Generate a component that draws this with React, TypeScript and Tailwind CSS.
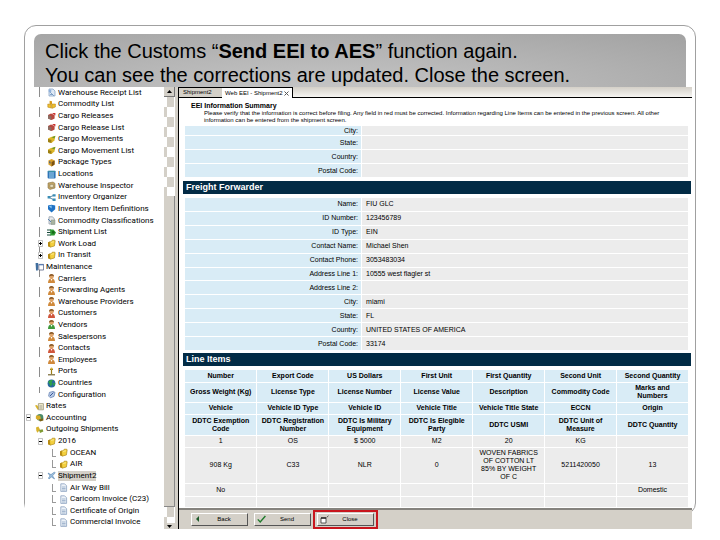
import React from "react"

type IconName =
  | "receipt"
  | "commodity"
  | "release"
  | "movement"
  | "package"
  | "location"
  | "inspector"
  | "organizer"
  | "shield"
  | "classes"
  | "truck"
  | "folder"
  | "maintenance"
  | "person"
  | "personGreen"
  | "personRed"
  | "port"
  | "globe"
  | "config"
  | "rates"
  | "accounting"
  | "outgoing"
  | "plane"
  | "doc"

type TreeItem = {
  label: string
  icon: IconName
  level: 0 | 1 | 2
  toggle?: "+" | "-"
  branch?: boolean
  selected?: boolean
}

const treeItems: TreeItem[] = [
  { label: "Warehouse Receipt List", icon: "receipt", level: 1 },
  { label: "Commodity List", icon: "commodity", level: 1 },
  { label: "Cargo Releases", icon: "release", level: 1 },
  { label: "Cargo Release List", icon: "release", level: 1 },
  { label: "Cargo Movements", icon: "movement", level: 1 },
  { label: "Cargo Movement List", icon: "movement", level: 1 },
  { label: "Package Types", icon: "package", level: 1 },
  { label: "Locations", icon: "location", level: 1 },
  { label: "Warehouse Inspector", icon: "inspector", level: 1 },
  { label: "Inventory Organizer", icon: "organizer", level: 1 },
  { label: "Inventory Item Definitions", icon: "shield", level: 1 },
  { label: "Commodity Classifications", icon: "classes", level: 1 },
  { label: "Shipment List", icon: "truck", level: 1 },
  { label: "Work Load", icon: "folder", level: 1, toggle: "+" },
  { label: "In Transit", icon: "folder", level: 1, toggle: "+" },
  { label: "Maintenance", icon: "maintenance", level: 0 },
  { label: "Carriers", icon: "person", level: 1 },
  { label: "Forwarding Agents", icon: "person", level: 1 },
  { label: "Warehouse Providers", icon: "person", level: 1 },
  { label: "Customers", icon: "personRed", level: 1 },
  { label: "Vendors", icon: "personGreen", level: 1 },
  { label: "Salespersons", icon: "person", level: 1 },
  { label: "Contacts", icon: "personRed", level: 1 },
  { label: "Employees", icon: "person", level: 1 },
  { label: "Ports", icon: "port", level: 1 },
  { label: "Countries", icon: "globe", level: 1 },
  { label: "Configuration", icon: "config", level: 1 },
  { label: "Rates", icon: "rates", level: 0 },
  { label: "Accounting", icon: "accounting", level: 0, toggle: "-" },
  { label: "Outgoing Shipments", icon: "outgoing", level: 0 },
  { label: "2016", icon: "folder", level: 1, toggle: "-" },
  { label: "OCEAN", icon: "folder", level: 2, branch: true },
  { label: "AIR", icon: "folder", level: 2, branch: true },
  { label: "Shipment2", icon: "plane", level: 1, toggle: "-", selected: true },
  { label: "Air Way Bill", icon: "doc", level: 2, branch: true },
  { label: "Caricom Invoice (C23)", icon: "doc", level: 2, branch: true },
  { label: "Certificate of Origin", icon: "doc", level: 2, branch: true },
  { label: "Commercial Invoice", icon: "doc", level: 2, branch: true },
]

const shipperRows = [
  ["City:", ""],
  ["State:", ""],
  ["Country:", ""],
  ["Postal Code:", ""],
]

const forwarderRows = [
  ["Name:", "FIU GLC"],
  ["ID Number:", "123456789"],
  ["ID Type:", "EIN"],
  ["Contact Name:", "Michael Shen"],
  ["Contact Phone:", "3053483034"],
  ["Address Line 1:", "10555 west flagler st"],
  ["Address Line 2:", ""],
  ["City:", "miami"],
  ["State:", "FL"],
  ["Country:", "UNITED STATES OF AMERICA"],
  ["Postal Code:", "33174"],
]

const headRows = [
  {
    height: "h-[12px]",
    cells: ["Number", "Export Code", "US Dollars", "First Unit", "First Quantity", "Second Unit", "Second Quantity"],
  },
  {
    height: "h-[20px]",
    cells: [
      "Gross Weight (Kg)",
      "License Type",
      "License Number",
      "License Value",
      "Description",
      "Commodity Code",
      "Marks and Numbers",
    ],
  },
  {
    height: "h-[12px]",
    cells: ["Vehicle", "Vehicle ID Type", "Vehicle ID", "Vehicle Title", "Vehicle Title State", "ECCN", "Origin"],
  },
  {
    height: "h-[21px]",
    cells: [
      "DDTC Exemption Code",
      "DDTC Registration Number",
      "DDTC Is Military Equipment",
      "DDTC Is Elegible Party",
      "DDTC USMI",
      "DDTC Unit of Measure",
      "DDTC Quantity",
    ],
  },
]

const bodyRows = [
  { height: "h-[12px]", cells: ["1", "OS", "$ 5000", "M2", "20", "KG", ""] },
  {
    height: "h-[36px]",
    cells: ["908 Kg", "C33", "NLR", "0", "WOVEN FABRICS OF COTTON LT 85% BY WEIGHT OF C", "5211420050", "13"],
  },
  { height: "h-[13px]", cells: ["No", "", "", "", "", "", "Domestic"] },
  { height: "h-[11px]", cells: ["", "", "", "", "", "", ""] },
]

const indent = { 0: "pl-0", 1: "pl-[12px]", 2: "pl-[24px]" }

const person = (shirt: string) => (
  <>
    <circle cx="4.5" cy="2.6" r="2.3" fill="#e0a468" />
    <path d="M2 2.6a2.5 2.5 0 0 1 5 0C6 1.4 4 1.4 2 2.6z" fill="#8a5a28" />
    <path d="M1 9c0-3 1.4-4.4 3.5-4.4S8 6 8 9z" fill={shirt} />
    <path d="M3.6 5l.9 2 .9-2z" fill="#fff" />
  </>
)

const glyphs: Record<IconName, React.ReactNode> = {
  receipt: (
    <>
      <path d="M2 1h4l2 2v5H2z" fill="#dfe9f5" stroke="#7d9cc0" strokeWidth=".7" />
      <path d="M3 4l4 4M3 6.5h3" stroke="#6f93bd" strokeWidth=".8" />
      <circle cx="3" cy="3" r="1.4" fill="#8fb0da" />
    </>
  ),
  commodity: (
    <>
      <path d="M2.6.8l2.4.4v3H2.6z" fill="#d99a1a" />
      <path d="M.8 4l3.4.6V8L.8 7.2zM4.8 4h3.6v3L4.8 8.4z" fill="#efc02f" stroke="#b07c10" strokeWidth=".5" />
    </>
  ),
  release: (
    <>
      <path d="M1 3l3-1.6L7.6 3v3.6L4.6 8 1 6.6z" fill="#b8473e" />
      <path d="M1 3l3.4 1.2V8L1 6.6z" fill="#8a6d62" />
      <path d="M5 1h3.4v2.6z" fill="#c9302c" />
    </>
  ),
  movement: (
    <>
      <path d="M1 3.6L4 2l4.4-1-1 4.4L4.6 8 1 7z" fill="#dcb528" />
      <path d="M1 4l3.4 1V8L1 7z" fill="#9b7e14" />
      <path d="M4.6 2.2L8.4.8 7.4 3.6z" fill="#6a9a2a" />
    </>
  ),
  package: (
    <>
      <path d="M1.4 2.4L4.6 1l3 1.4v4.2L4.6 8.4l-3.2-1.8z" fill="#d9a02c" />
      <path d="M4.6 4v4.4l3-1.8V2.4z" fill="#7b5212" />
      <path d="M2 3l1.6.7v2L2 5z" fill="#5c6b78" />
    </>
  ),
  location: (
    <>
      <rect x=".6" y=".8" width="8" height="7.6" rx="1" fill="#2f74b8" />
      <path d="M2 3h5M2 5h5M2 7h5" stroke="#b5e3f5" strokeWidth=".9" />
      <path d="M.8 1.4h7.6" stroke="#3e9a9e" strokeWidth=".8" />
    </>
  ),
  inspector: (
    <>
      <path d="M1 2l5-1 2 1.4V7L3 8.4 1 7z" fill="#c2a566" stroke="#8a7446" strokeWidth=".6" />
      <path d="M3 3.4h3.4v3H3z" fill="#e6dcbc" stroke="#8f8058" strokeWidth=".6" />
    </>
  ),
  organizer: (
    <>
      <path d="M2 4.4L6.6 2.4M2 4.4l4.8 2.4" stroke="#4f7c98" strokeWidth=".9" />
      <path d="M.6 3h2.8v2.6H.6zM5.6 1.2h3v2.2h-3zM5.6 5.6h3v2.4h-3z" fill="#3b8db5" />
    </>
  ),
  shield: (
    <>
      <path d="M1 1.6L4.6.8l3.6.8v3.6L4.6 8.6 1 5.2z" fill="#1f72c4" />
      <path d="M1.8 2.2l2.8-.6v3z" fill="#8cc6f0" />
    </>
  ),
  classes: (
    <>
      <path d="M2 .8h3.6L7.4 3v5H2z" fill="#e8eaec" stroke="#8793a0" strokeWidth=".7" />
      <path d="M4 4h4v4.4H4z" fill="#a9b4a0" stroke="#8a9088" strokeWidth=".5" />
      <path d="M1 3l3 3" stroke="#4878a8" strokeWidth=".9" />
    </>
  ),
  truck: (
    <>
      <path d="M0 2h4M0 4.5h4M0 7h4" stroke="#174a3b" strokeWidth="1" />
      <path d="M3 1.6h3.4L9 4.4 7.4 7.4H3.4z" fill="#2e9a32" />
      <circle cx="6.2" cy="4.4" r="1.4" fill="#186818" />
    </>
  ),
  folder: (
    <>
      <path d="M1 3.2l2-.8V8l-2-.6z" fill="#b98a10" />
      <path d="M2.4 3l2-.4.8-1.4h2.6l.4.8-.8 5L3 8.2z" fill="#f3cf3e" stroke="#a5800f" strokeWidth=".6" />
      <path d="M4 3.4l3-.6" stroke="#fff3a8" strokeWidth=".7" />
    </>
  ),
  maintenance: (
    <>
      <path d="M.6 1h2.6v4L2.8 8.4H1L.8 5z" fill="#3f6e9e" />
      <path d="M3.8 2.4h4.8V8H3.8z" fill="#fff" stroke="#555f80" strokeWidth=".8" />
      <path d="M3.8 2.8h4.8" stroke="#4c78b8" strokeWidth="1" />
    </>
  ),
  person: person("#d08a3c"),
  personGreen: person("#3f9a3c"),
  personRed: person("#d0563c"),
  port: (
    <>
      <path d="M4.5 1v6M3 2.4h3" stroke="#a08018" strokeWidth="1.2" />
      <path d="M1 7.8h7" stroke="#6b5a20" strokeWidth="1.1" />
      <circle cx="4.5" cy="1.4" r="1" fill="#d8b838" />
    </>
  ),
  globe: (
    <>
      <circle cx="4.5" cy="4.5" r="3.9" fill="#27689f" />
      <path d="M1.2 3C2.6.8 5 .6 6 1.4L4.6 3.2l1 1.2-1.8 3L2.4 5zM6.4 3.4l2 .8-1.2 2.8-1.2-1z" fill="#2fa04a" />
    </>
  ),
  config: (
    <>
      <path d="M2.4 2.4l3.8-1 1.8 1L7 6.4 3.4 7.8 1.6 6z" fill="#b9cbe6" stroke="#5a78ae" strokeWidth=".7" />
      <path d="M3 6l3.4-3.4" stroke="#38579a" strokeWidth="1" />
    </>
  ),
  rates: (
    <>
      <path d="M0 3.6l2.6 4.2 1.6-1.6L2 3z" fill="#dcb62c" />
      <path d="M3.4 1.6h5v6.2h-5z" fill="#f5efcf" stroke="#8f8a6c" strokeWidth=".7" />
      <path d="M4.4 4h3M4.4 6h3" stroke="#777" strokeWidth=".7" />
    </>
  ),
  accounting: (
    <>
      <circle cx="5" cy="4.4" r="3.3" fill="#4a8a6a" />
      <path d="M1 2.4h4l1 3-3 1.6L.8 5.6z" fill="#d8ac28" />
      <path d="M4 6.8l4.4-1.6v2.4L5 8.6z" fill="#7b6214" />
    </>
  ),
  outgoing: (
    <>
      <path d="M1 2.6l2.4-1.2L5 4.4 2.6 7.8 1.4 6z" fill="#d8b22c" />
      <path d="M4 5l3.6-.8.8 2.4L5 8z" fill="#7f9a34" />
    </>
  ),
  plane: (
    <path
      d="M1 2l3 1.6L7.4 1l.8.8L5.6 4.8 7.6 8 4.4 6 2 8l-.6-1L3 5z"
      fill="#9fc0de"
      stroke="#4779a8"
      strokeWidth=".5"
    />
  ),
  doc: (
    <>
      <path d="M1.8.8h3.8l2 2v5.6H1.8z" fill="#edf2f8" stroke="#7d96b8" strokeWidth=".7" />
      <path d="M3 4h3.6M3 5.5h3.6M3 7h3.6" stroke="#7390b6" strokeWidth=".6" />
    </>
  ),
}

const App = () => {
  return (
    <div className="bg-white px-6 pt-[25px] pb-6 font-['Liberation_Sans',Arial,sans-serif] text-black">
      <div className="rounded-[12px] border border-[#a0a0a0]">
        <SlideTitle />
        <div className="relative mr-[3px] -mb-[15px] flex h-[442px] bg-white">
          <NavigationTree />
          <ScrollBar />
          <EeiWindow />
        </div>
      </div>
    </div>
  )
}

const SlideTitle = () => (
  <h1 className="mx-[9px] mt-[8px] h-[53px] rounded-t-[7px] bg-[radial-gradient(ellipse_at_45%_110%,#c6c6c6,#b5b5b5_50%,#a2a2a2)] pt-[5px] pl-[11px] text-[20px] leading-[24px] whitespace-nowrap">
    Click the Customs “<b>Send EEI to AES</b>” function again.
    <br />
    You can see the corrections are updated. Close the screen.
  </h1>
)

const NavigationTree = () => (
  <nav
    aria-label="Explorer"
    className="w-[139px] flex-shrink-0 bg-[repeating-linear-gradient(#8c8c8c_0_10px,transparent_10px_20px)] bg-[length:1px_306px] bg-[position:14px_0] bg-no-repeat font-[Roboto,'Noto_Sans',sans-serif] text-[8px] leading-[10px]"
  >
    <ul className="flex h-[441px] flex-col">
      {treeItems.map((item) => (
        <li key={item.label} className={`flex min-h-0 flex-1 items-center ${indent[item.level]}`}>
          <span className="mr-[3px] flex w-[7px] flex-shrink-0 justify-center">
            {item.toggle && <Toggle sign={item.toggle} label={item.label} />}
            {item.branch && <span className="ml-[3px] h-[8px] w-[4px] border-b border-l border-[#999]" />}
          </span>
          <svg viewBox="0 0 9 9" className="mr-[2px] h-[9px] w-[9px] flex-shrink-0" aria-hidden="true">
            {glyphs[item.icon]}
          </svg>
          <a href="#" className={item.selected ? "bg-[#d4d0c8] whitespace-nowrap" : "whitespace-nowrap"}>
            {item.label}
          </a>
        </li>
      ))}
    </ul>
  </nav>
)

const Toggle = ({ sign, label }: { sign: "+" | "-"; label: string }) => (
  <button aria-label={`Toggle ${label}`} className="block bg-white">
    <svg viewBox="0 0 7 7" className="h-[7px] w-[7px]">
      <path d="M1.5.5h4v6h-4z" fill="#fff" stroke="#999" strokeWidth=".6" />
      <path d={sign === "+" ? "M2 3.5h3M3.5 2v3" : "M2 3.5h3"} stroke="#000" />
    </svg>
  </button>
)

const track =
  "bg-[conic-gradient(#d4d0c8_25%,#fff_0_50%,#d4d0c8_0_75%,#fff_0)] bg-[length:20px_20px] bg-[position:-7px_0]"

const ScrollBar = () => (
  <div className="flex w-[15px] flex-shrink-0 flex-col border-r border-black bg-[#d4d0c8] pr-[3px]">
    <button
      aria-label="Scroll up"
      className="flex h-[10px] items-center justify-center border-r border-b border-[#777] bg-[#d4d0c8]"
    >
      <svg viewBox="0 0 5 3" className="h-[3px] w-[5px]">
        <path d="M0 3L2.5 0 5 3z" />
      </svg>
    </button>
    <div className={`h-[99px] border-r border-white ${track}`} />
    <div className="flex-1 border-r border-b border-[#888] bg-[#d4d0c8]" />
    <div className={`h-[16px] border-r border-white ${track}`} />
    <button aria-label="Scroll down" className="flex h-[6px] items-center justify-center bg-[#d4d0c8]">
      <svg viewBox="0 0 5 3" className="h-[3px] w-[5px]">
        <path d="M0 0h5L2.5 3z" />
      </svg>
    </button>
  </div>
)

const EeiWindow = () => (
  <section className="flex min-w-0 flex-1 flex-col">
    <div className="flex h-[11px] flex-shrink-0 border-b border-black bg-linear-to-b from-[#d4d0c8] to-[#f6f5f2] text-[6px] leading-[9px] whitespace-nowrap">
      <button className="w-[43px] border-t border-black bg-[#d4d0c8] px-[4px] text-left">Shipment2</button>
      <button className="-mb-px flex w-[71px] items-center justify-between border-t border-r border-black bg-white px-[3px]">
        Web EEI - Shipment2
        <svg viewBox="0 0 5 5" className="h-[5px] w-[5px]" aria-hidden="true">
          <path d="M.5.5l4 4M4.5.5l-4 4" stroke="#555" />
        </svg>
      </button>
    </div>
    <div className="h-[28px] flex-shrink-0 pt-[4px] pr-[6px] pl-[12px]">
      <h2 className="text-[7px] leading-[8px] font-bold">EEI Information Summary</h2>
      <p className="pl-[13px] text-[6px] leading-[7px]">
        Please verify that the information is correct before filing. Any field in red must be corrected. Information
        regarding Line Items can be entered in the previous screen. All other information can be entered from the
        shipment screen.
      </p>
    </div>
    <FieldList rows={shipperRows} className="h-[52px] [&>div:first-child]:h-[10px] [&>div:first-child]:flex-none" />
    <Bar className="mt-[3px]">Freight Forwarder</Bar>
    <FieldList rows={forwarderRows} className="mt-[4px] h-[153px]" />
    <Bar className="mt-[2px]">Line Items</Bar>
    <LineItems />
    <footer className="flex flex-1 items-center border-t-2 border-[#85837e] bg-[#d4d0c8] pl-[12px]">
      <ActionButton label="Back">
        <path d="M5 1v6L2 4z" fill="#1e5a2a" />
      </ActionButton>
      <span className="w-[6px]" />
      <ActionButton label="Send">
        <path d="M.8 4.4L3.2 7 8.4 1" fill="none" stroke="#1f7a2c" strokeWidth="1.4" />
      </ActionButton>
      <div className="ml-[2px] flex items-center self-stretch border-2 border-[#c8161d] px-[2px]">
        <ActionButton label="Close">
          <path d="M1 3h5v5H1z" fill="#fff" stroke="#333" strokeWidth=".8" />
          <path d="M1 3h5" stroke="#111" strokeWidth="1.2" />
          <path d="M6.5 2.5L8.5.8" stroke="#333" strokeWidth=".8" />
        </ActionButton>
      </div>
    </footer>
  </section>
)

const FieldList = ({ rows, className }: { rows: string[][]; className: string }) => (
  <dl className={`mr-[4px] ml-[6px] flex flex-shrink-0 flex-col text-[7px] leading-[8px] ${className}`}>
    {rows.map(([name, value]) => (
      <div key={name} className="flex flex-1 border-b border-white">
        <dt className="flex w-[35%] items-center justify-end bg-[#d9ecf6] pr-[3px]">{name}</dt>
        <dd className="ml-px flex flex-1 items-center bg-[#ececec] pl-[4px]">{value}</dd>
      </div>
    ))}
  </dl>
)

const Bar = ({ className, children }: { className: string; children: React.ReactNode }) => (
  <h3
    className={`mr-px ml-[4px] h-[13px] flex-shrink-0 bg-[#022b45] pl-[3px] text-[9px] leading-[12px] font-bold text-white ${className}`}
  >
    {children}
  </h3>
)

const LineItems = () => (
  <div className="mt-[4px] mr-[3px] ml-[6px]">
    <table className="w-full table-fixed border-collapse text-center text-[7px] leading-[8px]">
      <thead>
        {headRows.map((row) => (
          <tr key={row.cells[0]} className={row.height}>
            {row.cells.map((cell) => (
              <th key={cell} className="border-r border-b border-white bg-[#d9ecf6] px-[3px] py-0 font-bold">
                {cell}
              </th>
            ))}
          </tr>
        ))}
      </thead>
      <tbody>
        {bodyRows.map((row, i) => (
          <tr key={i} className={row.height}>
            {row.cells.map((cell, j) => (
              <td key={j} className="border-r border-b border-white bg-[#ececec] px-[4px] py-0">
                {cell}
              </td>
            ))}
          </tr>
        ))}
      </tbody>
    </table>
  </div>
)

const ActionButton = ({ label, children }: { label: string; children: React.ReactNode }) => (
  <button className="flex h-[13px] w-[57px] items-center border border-t-white border-r-[#555] border-b-[#555] border-l-white bg-[#d4d0c8] pl-[2px] text-[6px] leading-[8px]">
    <svg viewBox="0 0 9 9" className="h-[9px] w-[9px]" aria-hidden="true">
      {children}
    </svg>
    <span className="flex-1 pr-[2px] text-center">{label}</span>
  </button>
)

export default App
